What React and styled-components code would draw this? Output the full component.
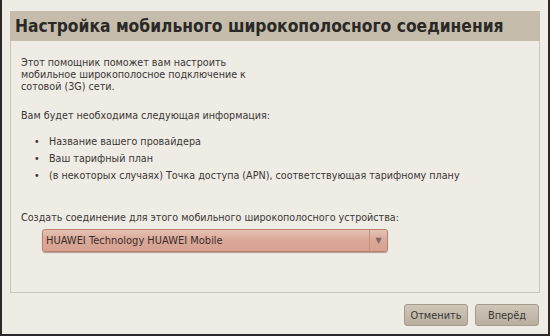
import React from 'react';
import styled, { createGlobalStyle } from 'styled-components';

const GlobalStyle = createGlobalStyle`
  html, body {
    margin: 0;
    padding: 0;
    background: #efebe5;
  }
`;

const Window = styled.div`
  box-sizing: border-box;
  width: 550px;
  height: 336px;
  padding: 11px 8px 0 8px;
  background: #efebe5;
  border-left: 2px solid #2b2a28;
  border-right: 2px solid #2b2a28;
  border-bottom: 2px solid #2b2a28;
  font-family: 'DejaVu Sans', sans-serif;
  color: #3a3835;
  display: flex;
  flex-direction: column;
`;

const Header = styled.div`
  height: 30px;
  background: #c5bcab;
  display: flex;
  align-items: center;
  padding-left: 5px;
  overflow: hidden;
`;

const Title = styled.h1`
  margin: 0;
  font-family: 'DejaVu Sans Condensed', 'DejaVu Sans', sans-serif;
  font-size: 17.3px;
  font-weight: bold;
  white-space: nowrap;
  color: #2b2927;
`;

const Panel = styled.div`
  box-sizing: border-box;
  height: 252px;
  border: 1px solid #cbc5ba;
  border-top: none;
  background: #efebe5;
  padding: 16px 10px 0 10px;
  font-size: 9.6px;
  line-height: 12px;
`;

const Paragraph = styled.p`
  margin: 0 0 ${p => p.gap}px 0;
`;

const List = styled.ul`
  margin: 0 0 30px 0;
  padding: 0 0 0 13px;
  list-style: none;
`;

const Item = styled.li`
  margin-bottom: 5px;
  &::before {
    content: '•';
    display: inline-block;
    width: 15px;
  }
`;

const Select = styled.div`
  box-sizing: border-box;
  margin-left: 21px;
  width: 346px;
  height: 23px;
  display: flex;
  border: 1px solid #b8826f;
  border-radius: 3px;
  background: linear-gradient(#e6c2b4, #dba999 45%, #d6a190);
  box-shadow: 0 1px 1px rgba(90, 60, 50, 0.45);
`;

const SelectText = styled.div`
  flex: 1;
  display: flex;
  align-items: center;
  padding-left: 3px;
  font-size: 9.9px;
  color: #3a2e2a;
`;

const SelectArrow = styled.div`
  width: 17px;
  border-left: 1px solid #c39282;
  display: flex;
  align-items: center;
  justify-content: center;
  color: #86675d;
  font-size: 8px;
`;

const Footer = styled.div`
  display: flex;
  justify-content: flex-end;
  gap: 7px;
  padding: 11px 1px 0 0;
`;

const Button = styled.button`
  box-sizing: border-box;
  width: ${p => p.w}px;
  height: 22px;
  border: 1px solid #a69b8b;
  border-radius: 3px;
  background: linear-gradient(#cec6b8, #b9af9f);
  font-family: 'DejaVu Sans', sans-serif;
  font-size: 9.8px;
  color: #3a3835;
  padding: 0;
`;

export default function App() {
  return (
    <>
      <GlobalStyle />
      <Window>
        <Header>
          <Title>Настройка мобильного широкополосного соединения</Title>
        </Header>
        <Panel>
          <Paragraph gap={17}>
            Этот помощник поможет вам настроить<br />
            мобильное широкополосное подключение к<br />
            сотовой (3G) сети.
          </Paragraph>
          <Paragraph gap={14}>Вам будет необходима следующая информация:</Paragraph>
          <List>
            <Item>Название вашего провайдера</Item>
            <Item>Ваш тарифный план</Item>
            <Item>(в некоторых случаях) Точка доступа (APN), соответствующая тарифному плану</Item>
          </List>
          <Paragraph gap={5}>
            Создать соединение для этого мобильного широкополосного устройства:
          </Paragraph>
          <Select>
            <SelectText>HUAWEI Technology HUAWEI Mobile</SelectText>
            <SelectArrow>▼</SelectArrow>
          </Select>
        </Panel>
        <Footer>
          <Button w={64}>Отменить</Button>
          <Button w={64}>Вперёд</Button>
        </Footer>
      </Window>
    </>
  );
}
